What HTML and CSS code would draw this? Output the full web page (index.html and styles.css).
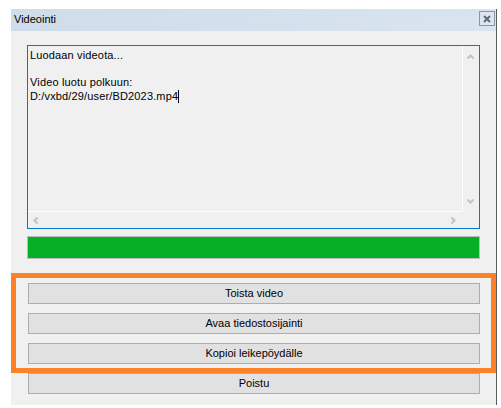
FILE: index.html
```html
<!DOCTYPE html>
<html lang="fi">
<head>
<meta charset="utf-8">
<title>Videointi</title>
<link rel="stylesheet" href="styles.css">
</head>
<body>
<div class="window">
  <div class="titlebar">
    <span class="title">Videointi</span>
    <span class="close">
      <svg width="8" height="8" viewBox="0 0 8 8"><path d="M1 1L7 7M7 1L1 7" stroke="#5f6a78" stroke-width="2" fill="none"/></svg>
    </span>
  </div>
  <div class="content">
    <div class="log">
      <div class="log-text">Luodaan videota...<br><br>Video luotu polkuun:<br>D:/vxbd/29/user/BD2023.mp4<span class="caret"></span></div>
      <div class="vscroll">
        <svg width="7" height="5" viewBox="0 0 7 5"><polyline points="0.5,4.5 3.5,1.5 6.5,4.5" stroke="#c2c2c2" stroke-width="2" fill="none"/></svg>
        <svg width="7" height="5" viewBox="0 0 7 5"><polyline points="0.5,0.5 3.5,3.5 6.5,0.5" stroke="#c2c2c2" stroke-width="2" fill="none"/></svg>
      </div>
      <div class="hscroll">
        <svg width="5" height="7" viewBox="0 0 5 7"><polyline points="4.5,0.5 1.5,3.5 4.5,6.5" stroke="#c2c2c2" stroke-width="2" fill="none"/></svg>
        <svg width="5" height="7" viewBox="0 0 5 7"><polyline points="0.5,0.5 3.5,3.5 0.5,6.5" stroke="#c2c2c2" stroke-width="2" fill="none"/></svg>
      </div>
      <div class="corner"></div>
    </div>
    <div class="progress"><div class="progress-fill"></div></div>
  </div>
  <div class="highlight">
    <button class="btn">Toista video</button>
    <button class="btn">Avaa tiedostosijainti</button>
    <button class="btn">Kopioi leikepöydälle</button>
  </div>
  <div class="footer">
    <button class="btn">Poistu</button>
  </div>
</div>
</body>
</html>
```
FILE: styles.css
```css
html, body {
  margin: 0;
  padding: 0;
  background: #ffffff;
}
body {
  font-family: "Liberation Sans", Arial, sans-serif;
  font-size: 11px;
  color: #000;
}
.window {
  margin: 9px 0 0 11px;
  width: 485px;
  height: 396px;
  border-right: 1px solid #5c5c5c;
  background: #f0f0f0;
  display: flex;
  flex-direction: column;
}
.titlebar {
  height: 22px;
  flex: none;
  display: flex;
  justify-content: space-between;
  align-items: flex-start;
  background: linear-gradient(to right, #cfdcea, #d9e4ef);
}
.title {
  margin: 4px 0 0 3px;
  line-height: 13px;
}
.close {
  margin: 2px 1px 0 0;
  width: 14px;
  height: 13px;
  border: 1px solid #8796a8;
  background: #dde6ef;
  display: flex;
  align-items: center;
  justify-content: center;
}
.close svg { display: block; }
.content {
  padding: 14px 0 0 16px;
  display: flex;
  flex-direction: column;
}
.log {
  width: 451px;
  height: 182px;
  border: 1px solid #0078d7;
  display: grid;
  grid-template-columns: 1fr 17px;
  grid-template-rows: 1fr 17px;
}
.log-text {
  padding: 3px 0 0 2px;
  line-height: 13.5px;
  letter-spacing: 0.15px;
  white-space: nowrap;
}
.caret {
  display: inline-block;
  width: 1px;
  height: 13px;
  background: #000;
  vertical-align: -3px;
}
.vscroll {
  border-left: 1px solid #ffffff;
  display: flex;
  flex-direction: column;
  justify-content: space-between;
  align-items: center;
  padding: 8px 1px 7px 0;
}
.hscroll {
  border-top: 1px solid #ffffff;
  display: flex;
  justify-content: space-between;
  align-items: center;
  padding: 0 6px 0 5px;
}
.vscroll svg, .hscroll svg { display: block; }
.progress {
  margin-top: 7px;
  width: 451px;
  height: 21px;
  border: 1px solid #bcbcbc;
  background: #e6e6e6;
}
.progress-fill {
  width: 100%;
  height: 100%;
  background: #06b025;
}
.highlight {
  margin-top: 14px;
  border: 5px solid #fd8227;
  padding: 5px 10px 4px 12px;
  display: flex;
  flex-direction: column;
  gap: 9px;
}
.btn {
  display: block;
  width: 452px;
  height: 21px;
  margin: 0;
  padding: 0;
  border: 1px solid #adadad;
  background: #e1e1e1;
  font-family: "Liberation Sans", Arial, sans-serif;
  font-size: 11px;
  color: #000;
  text-align: center;
  line-height: 19px;
}
.footer {
  padding: 0 0 0 17px;
}
```
